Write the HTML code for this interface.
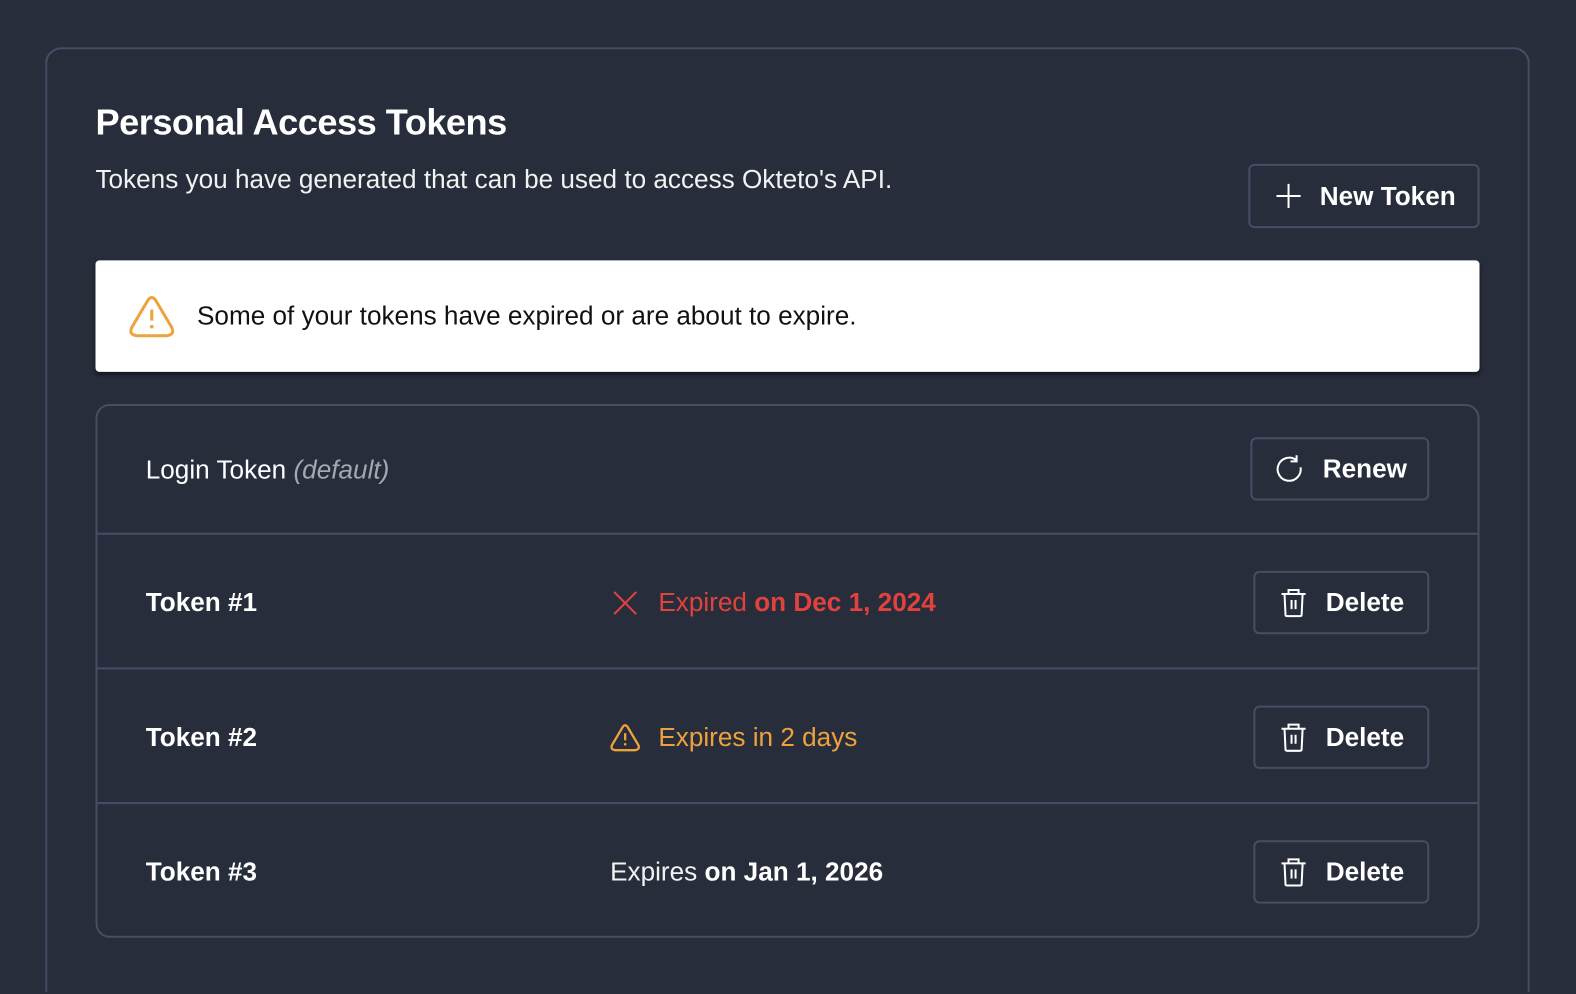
<!DOCTYPE html>
<html><head><meta charset="utf-8"><style>
*{box-sizing:border-box;margin:0;padding:0}
html,body{width:1576px;height:994px;overflow:hidden}
body{background:#282e3c;font-family:"Liberation Sans",sans-serif;color:#fff;position:relative}
#w{position:absolute;left:0;top:0;width:1568px;height:989px;transform:scale(1.0051);transform-origin:0 0}
.card{position:absolute;left:45px;top:47px;width:1477px;height:940px;border:2px solid #454e66;border-bottom:none;border-radius:16px 16px 0 0;background:#282d3b}
h1{position:absolute;left:95px;top:101px;font-size:36px;font-weight:bold;letter-spacing:-0.5px}
.sub{position:absolute;left:95px;top:163px;font-size:26px;color:#f2f2f2}
.btn{position:absolute;border:2px solid #454e66;border-radius:6px;display:flex;align-items:center;font-weight:bold;font-size:26px;color:#fff}
.btn svg{margin-right:18px}
.alert{position:absolute;left:95px;top:259px;width:1377px;height:111px;background:#fff;border-radius:4px;box-shadow:0 3px 4px rgba(0,0,0,.5);color:#111;font-size:26px;display:flex;align-items:center;padding-left:33px}
.list{position:absolute;left:95px;top:402px;width:1377px;height:531px;border:2px solid #454e66;border-radius:14px}
.row{position:absolute;left:0;width:1373px;border-bottom:2px solid #454e66}
.name{position:absolute;left:48px;font-size:26px;font-weight:bold}
.st{position:absolute;font-size:26px;display:flex;align-items:center}
</style></head><body><div id="w">
<div class="card"></div>
<h1>Personal Access Tokens</h1>
<div class="sub">Tokens you have generated that can be used to access Okteto's API.</div>
<div class="btn" style="left:1242px;top:163px;width:230px;height:64px;padding-left:25px">
<svg width="26" height="26" viewBox="0 0 26 26"><path d="M13 1V25M1 13H25" stroke="#fff" stroke-width="2"/></svg>New Token</div>
<div class="alert"><svg width="46" height="42" viewBox="0 0 46 42" style="margin-right:22px"><path d="M19 5Q23 -1 27 5L43 32Q46 39 38 40H8Q0 39 3 32Z" fill="none" stroke="#eea23e" stroke-width="3" stroke-linejoin="round"/><path d="M23 14V25" stroke="#eea23e" stroke-width="3"/><circle cx="23" cy="31" r="1.8" fill="#eea23e"/></svg>Some of your tokens have expired or are about to expire.</div>
<div class="list">
<div class="row" style="top:0;height:128px"><div class="name" style="font-weight:normal;top:48px">Login Token <i style="color:#a4a8b2">(default)</i></div></div>
<div class="row" style="top:128px;height:134px"><div class="name" style="top:52px">Token #1</div>
<div class="st" style="left:512px;top:52px;color:#e2423d"><svg width="26" height="26" viewBox="0 0 26 26" style="margin-right:20px"><path d="M2 2L24 24M24 2L2 24" stroke="#e2423d" stroke-width="2"/></svg>Expired&nbsp;<b>on Dec 1, 2024</b></div></div>
<div class="row" style="top:262px;height:134px"><div class="name" style="top:52px">Token #2</div>
<div class="st" style="left:510px;top:52px;color:#eea23e"><svg width="30" height="28" viewBox="0 0 46 42" style="margin-right:18px"><path d="M19 5Q23 -1 27 5L43 32Q46 39 38 40H8Q0 39 3 32Z" fill="none" stroke="#eea23e" stroke-width="3.5" stroke-linejoin="round"/><path d="M23 14V25" stroke="#eea23e" stroke-width="3.5"/><circle cx="23" cy="31" r="2" fill="#eea23e"/></svg>Expires in 2 days</div></div>
<div class="row" style="top:396px;height:133px;border:none"><div class="name" style="top:52px">Token #3</div>
<div class="st" style="left:510px;top:52px;color:#f2f2f2">Expires&nbsp;<b style="color:#fff">on Jan 1, 2026</b></div></div>
</div>
<div class="btn" style="left:1244px;top:435px;width:178px;height:63px;padding-left:22px">
<svg width="30" height="30" viewBox="0 0 30 30"><path d="M26 13A11.5 11.5 0 1 1 22 6" fill="none" stroke="#fff" stroke-width="2"/><path d="M22 1V7H16" fill="none" stroke="#fff" stroke-width="2"/></svg>Renew</div>
<div class="btn" style="left:1247px;top:568px;width:175px;height:63px;padding-left:24px"><svg width="28" height="30" viewBox="0 0 28 30"><path d="M2 6H26M9 6V2H19V6M5 6L6 27Q6 28 8 28H20Q22 28 22 27L23 6M12 12V21M16 12V21" fill="none" stroke="#fff" stroke-width="2"/></svg>Delete</div>
<div class="btn" style="left:1247px;top:702px;width:175px;height:63px;padding-left:24px"><svg width="28" height="30" viewBox="0 0 28 30"><path d="M2 6H26M9 6V2H19V6M5 6L6 27Q6 28 8 28H20Q22 28 22 27L23 6M12 12V21M16 12V21" fill="none" stroke="#fff" stroke-width="2"/></svg>Delete</div>
<div class="btn" style="left:1247px;top:836px;width:175px;height:63px;padding-left:24px"><svg width="28" height="30" viewBox="0 0 28 30"><path d="M2 6H26M9 6V2H19V6M5 6L6 27Q6 28 8 28H20Q22 28 22 27L23 6M12 12V21M16 12V21" fill="none" stroke="#fff" stroke-width="2"/></svg>Delete</div>
</div></body></html>
